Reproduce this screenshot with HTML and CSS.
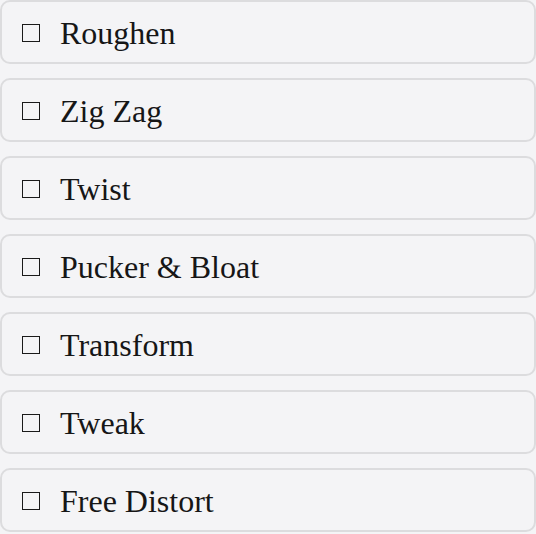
FILE: index.html
```html
<!DOCTYPE html>
<html>
<head>
<meta charset="utf-8">
<link rel="stylesheet" href="styles.css">
</head>
<body>
<div class="list">
  <div class="item"><span class="box"></span><span class="label">Roughen</span></div>
  <div class="item"><span class="box"></span><span class="label">Zig Zag</span></div>
  <div class="item"><span class="box"></span><span class="label">Twist</span></div>
  <div class="item"><span class="box"></span><span class="label">Pucker &amp; Bloat</span></div>
  <div class="item"><span class="box"></span><span class="label">Transform</span></div>
  <div class="item"><span class="box"></span><span class="label">Tweak</span></div>
  <div class="item"><span class="box"></span><span class="label">Free Distort</span></div>
</div>
</body>
</html>
```
FILE: styles.css
```css
html, body {
  margin: 0;
  padding: 0;
  background: #f4f4f6;
}
.list {
  display: flex;
  flex-direction: column;
  gap: 14px;
  width: 536px;
}
.item {
  box-sizing: border-box;
  height: 64px;
  border: 2px solid #dcdcde;
  border-radius: 10px;
  background: #f4f4f6;
  display: flex;
  align-items: center;
  padding-left: 20px;
  gap: 20px;
  font-family: "Liberation Serif", "Times New Roman", serif;
  font-size: 32px;
  color: #161616;
}
.box {
  box-sizing: border-box;
  width: 18px;
  height: 18px;
  border: 1.5px solid #1a1a1a;
  flex: none;
  margin-top: 2px;
}
.label {
  line-height: 1;
  margin-top: 2px;
}
```
